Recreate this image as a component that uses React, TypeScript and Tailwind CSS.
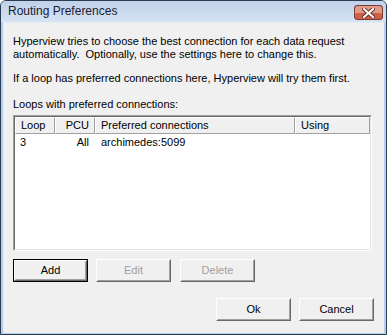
import React from "react";

const font = { fontFamily: '"Liberation Sans", Arial, sans-serif' };

type BtnProps = { label: string; disabled?: boolean; isDefault?: boolean };

function Btn({ label, disabled, isDefault }: BtnProps) {
  const face = (
    <div className="flex h-full w-full items-center justify-center border border-t-white border-l-white border-r-[#696969] border-b-[#696969] bg-[#f0f0f0]">
      <div className="flex h-full w-full items-center justify-center border border-t-[#f0f0f0] border-l-[#f0f0f0] border-r-[#a0a0a0] border-b-[#a0a0a0]">
        <span className={disabled ? "text-[#a0a0a0]" : "text-black"}>{label}</span>
      </div>
    </div>
  );
  return (
    <div
      className={`h-[23px] w-[75px] ${isDefault ? "border border-black" : ""}`}
    >
      {face}
    </div>
  );
}

function HeaderCell({
  label,
  width,
  right,
}: {
  label: string;
  width: string;
  right?: boolean;
}) {
  return (
    <div
      className={`${width} flex h-full items-center border border-t-white border-l-white border-r-[#a0a0a0] border-b-[#a0a0a0] bg-[#f0f0f0] px-[5px] ${
        right ? "justify-end" : ""
      }`}
    >
      {label}
    </div>
  );
}

export default function App() {
  return (
    <div
      className="flex h-[335px] w-[387px] flex-col overflow-hidden rounded-t-[6px] border border-[#2b3c52] bg-[#b4cfee] text-[11px] leading-[13px]"
      style={font}
    >
      {/* title bar */}
      <div className="relative flex h-[21px] shrink-0 items-center bg-gradient-to-b from-[#bfd2ea] to-[#d6e3f3] pl-[7px]">
        <span className="text-[12px] text-[#1a1a2e]">Routing Preferences</span>
        <div className="absolute right-[3px] top-[4px] flex h-[15px] w-[29px] items-center justify-center rounded-[3px] border border-[#7a3b30] bg-[#cd5f49] shadow-[inset_0_7px_0_#e29a88]">
          <svg width="13" height="10" viewBox="0 0 13 10">
            <path
              d="M2 1 L11 9 M11 1 L2 9"
              stroke="#6b3227"
              strokeWidth="4"
              strokeLinecap="square"
            />
            <path
              d="M2 1 L11 9 M11 1 L2 9"
              stroke="#ffffff"
              strokeWidth="2"
              strokeLinecap="square"
            />
          </svg>
        </div>
      </div>

      {/* client area */}
      <div className="mx-[2px] mb-[1px] flex flex-1 flex-col border-l border-t border-[#e4ecf6] bg-[#f0f0f0] px-[9px] pt-[12px]">
        <p>
          Hyperview tries to choose the best connection for each data request
          <br />
          automatically.&nbsp; Optionally, use the settings here to change this.
        </p>
        <p className="mt-[11px]">
          If a loop has preferred connections here, Hyperview will try them first.
        </p>
        <p className="mt-[13px]">Loops with preferred connections:</p>

        {/* list view */}
        <div className="mt-[4px] h-[136px] w-[359px] border border-t-[#a0a0a0] border-l-[#a0a0a0] border-r-white border-b-white">
          <div className="h-full w-full border border-t-[#696969] border-l-[#696969] border-r-[#e3e3e3] border-b-[#e3e3e3] bg-white">
            <div className="flex h-[17px]">
              <HeaderCell label="Loop" width="w-[40px]" />
              <HeaderCell label="PCU" width="w-[40px]" right />
              <HeaderCell label="Preferred connections" width="w-[200px]" />
              <HeaderCell label="Using" width="w-[75px]" />
            </div>
            <div className="mt-[1px] flex h-[14px] items-center">
              <div className="w-[40px] px-[5px]">3</div>
              <div className="w-[40px] px-[6px] text-right">All</div>
              <div className="w-[200px] px-[6px]">archimedes:5099</div>
              <div className="w-[75px]" />
            </div>
          </div>
        </div>

        <div className="mt-[8px] flex gap-[8px]">
          <Btn label="Add" isDefault />
          <Btn label="Edit" disabled />
          <div className="ml-[1px]">
            <Btn label="Delete" disabled />
          </div>
        </div>

        <div className="mt-[16px] flex justify-end gap-[8px] pr-[1px]">
          <Btn label="Ok" />
          <Btn label="Cancel" />
        </div>
      </div>
    </div>
  );
}
